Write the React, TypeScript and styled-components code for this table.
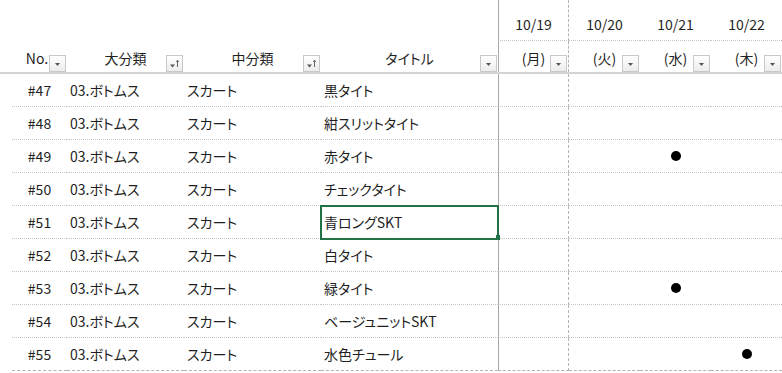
import styled, { createGlobalStyle } from "styled-components";

const GlobalStyle = createGlobalStyle`
  body {
    margin: 0;
    background: #ffffff;
    font-family: "Noto Sans CJK JP", "Noto Sans", sans-serif;
    font-size: 14px;
    color: #1f1f1f;
    font-feature-settings: "palt";
  }
`;

const COLUMNS = "12px 55px 117px 137px 177px 71px 71px 71px 71px";

const Sheet = styled.div`
  width: 782px;
  height: 373px;
  overflow: hidden;
`;

const HeaderGrid = styled.div`
  display: grid;
  grid-template-columns: ${COLUMNS};
  grid-template-rows: 41px 31px;
  border-bottom: 2px solid #d4d4d4;
`;

const HeadCell = styled.div<{ $col: number }>`
  grid-row: 1 / 3;
  grid-column: ${(p) => p.$col};
  position: relative;
  display: flex;
  align-items: flex-end;
  justify-content: center;
  padding-bottom: 4px;
  line-height: 20px;
`;

const DateCell = styled.div<{ $col: number; $row: number; $first?: boolean }>`
  grid-row: ${(p) => p.$row};
  grid-column: ${(p) => p.$col};
  position: relative;
  display: flex;
  align-items: flex-end;
  justify-content: center;
  line-height: 20px;
  padding-bottom: ${(p) => (p.$row === 1 ? "6px" : "4px")};
  border-bottom: ${(p) => (p.$row === 1 ? "1px dotted #c4c4c4" : "none")};
  border-left: ${(p) => (p.$first ? "1px solid #a8a8a8" : "none")};
  border-right: ${(p) => (p.$first ? "1px dashed #b4b4b4" : "none")};
`;

const FilterBox = styled.span`
  position: absolute;
  right: 1px;
  bottom: 0;
  width: 17px;
  height: 17px;
  box-sizing: border-box;
  border: 1px solid #c9c9c9;
  background: linear-gradient(#ffffff, #ececec);
  display: flex;
  align-items: center;
  justify-content: center;
`;

const Row = styled.div`
  display: grid;
  grid-template-columns: ${COLUMNS};
  height: 33px;
`;

const Cell = styled.div<{ $align?: "center" | "left"; $last?: boolean; $selected?: boolean; $first?: boolean }>`
  position: relative;
  display: flex;
  align-items: center;
  justify-content: ${(p) => (p.$align === "center" ? "center" : "flex-start")};
  padding-left: ${(p) => (p.$align === "center" ? "0" : "3px")};
  border-bottom: 1px ${(p) => (p.$last ? "dashed #b4b4b4" : "dotted #c4c4c4")};
  border-left: ${(p) => (p.$first ? "1px solid #a8a8a8" : "none")};
  border-right: ${(p) => (p.$first ? "1px dashed #b4b4b4" : "none")};
  white-space: nowrap;
  ${(p) =>
    p.$selected &&
    `
    outline: 2px solid #217346;
    outline-offset: -1px;
    z-index: 1;
    &::after {
      content: "";
      position: absolute;
      right: -2px;
      bottom: -2px;
      width: 4px;
      height: 5px;
      background: #217346;
    }
  `}
`;

const Gutter = styled.div``;

const Dot = styled.span`
  width: 10px;
  height: 10px;
  border-radius: 50%;
  background: #000;
`;

function Filter({ sorted }: { sorted?: boolean }) {
  return (
    <FilterBox>
      <svg width="15" height="15" viewBox="0 0 15 15">
        {sorted ? (
          <>
            <path d="M3 8.5h5l-2.5 3z" fill="#555" />
            <path d="M10.5 4.5v6.5" stroke="#666" strokeWidth="1" />
            <path d="M9.2 6l1.3-1.8L11.8 6" fill="none" stroke="#666" strokeWidth="0.9" />
          </>
        ) : (
          <path d="M5 7h5l-2.5 3z" fill="#555" />
        )}
      </svg>
    </FilterBox>
  );
}

const dates = [
  { date: "10/19", day: "(月)" },
  { date: "10/20", day: "(火)" },
  { date: "10/21", day: "(水)" },
  { date: "10/22", day: "(木)" },
];

const items = [
  { no: "#47", title: "黒タイト", mark: -1 },
  { no: "#48", title: "紺スリットタイト", mark: -1 },
  { no: "#49", title: "赤タイト", mark: 2 },
  { no: "#50", title: "チェックタイト", mark: -1 },
  { no: "#51", title: "青ロングSKT", mark: -1 },
  { no: "#52", title: "白タイト", mark: -1 },
  { no: "#53", title: "緑タイト", mark: 2 },
  { no: "#54", title: "ベージュニットSKT", mark: -1 },
  { no: "#55", title: "水色チュール", mark: 3 },
];

export default function App() {
  return (
    <Sheet>
      <GlobalStyle />
      <HeaderGrid>
        <HeadCell $col={2}>
          <span style={{ marginRight: 5 }}>No.</span>
          <Filter />
        </HeadCell>
        <HeadCell $col={3}>
          大分類
          <Filter sorted />
        </HeadCell>
        <HeadCell $col={4}>
          中分類
          <Filter sorted />
        </HeadCell>
        <HeadCell $col={5}>
          タイトル
          <Filter />
        </HeadCell>
        {dates.map((d, i) => (
          <DateCell key={d.date} $col={6 + i} $row={1} $first={i === 0}>
            {d.date}
          </DateCell>
        ))}
        {dates.map((d, i) => (
          <DateCell key={d.day} $col={6 + i} $row={2} $first={i === 0}>
            {d.day}
            <Filter />
          </DateCell>
        ))}
      </HeaderGrid>

      {items.map((item, r) => (
        <Row key={item.no}>
          <Gutter />
          <Cell $align="center" $last={r === items.length - 1}>
            {item.no}
          </Cell>
          <Cell $last={r === items.length - 1}>03.ボトムス</Cell>
          <Cell $last={r === items.length - 1}>スカート</Cell>
          <Cell $last={r === items.length - 1} $selected={item.no === "#51"}>
            {item.title}
          </Cell>
          {dates.map((d, i) => (
            <Cell key={d.date} $align="center" $first={i === 0} $last={r === items.length - 1}>
              {item.mark === i && <Dot />}
            </Cell>
          ))}
        </Row>
      ))}
    </Sheet>
  );
}
